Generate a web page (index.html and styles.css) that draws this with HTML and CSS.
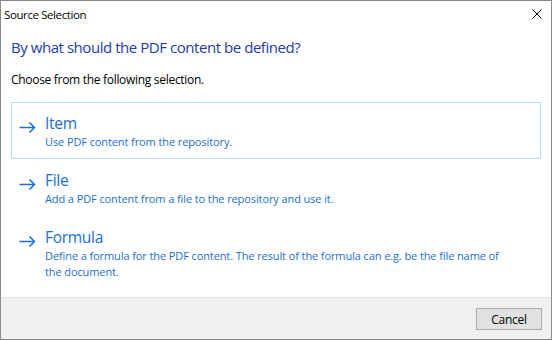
FILE: index.html
```html
<!DOCTYPE html>
<html>
<head>
<meta charset="utf-8">
<link rel="stylesheet" href="styles.css">
</head>
<body>
<div class="window">
  <div class="titlebar">
    <span class="title">Source Selection</span>
    <svg class="close" width="10" height="10" viewBox="0 0 10 10"><path d="M0.5 0.5L9.5 9.5M9.5 0.5L0.5 9.5" stroke="#000" stroke-width="1" fill="none"/></svg>
  </div>
  <div class="content">
    <h1 class="heading">By what should the PDF content be defined?</h1>
    <p class="intro">Choose from the following selection.</p>
    <div class="options">
      <div class="option selected">
        <svg class="arrow" width="17" height="11" viewBox="0 0 17 11"><path d="M0.5 5.5H15.5M10.5 0.5L15.5 5.5L10.5 10.5" stroke="#1a6fd0" stroke-width="1.5" fill="none"/></svg>
        <div class="otext">
          <div class="otitle">Item</div>
          <div class="odesc">Use PDF content from the repository.</div>
        </div>
      </div>
      <div class="option">
        <svg class="arrow" width="17" height="11" viewBox="0 0 17 11"><path d="M0.5 5.5H15.5M10.5 0.5L15.5 5.5L10.5 10.5" stroke="#1a6fd0" stroke-width="1.5" fill="none"/></svg>
        <div class="otext">
          <div class="otitle">File</div>
          <div class="odesc">Add a PDF content from a file to the repository and use it.</div>
        </div>
      </div>
      <div class="option">
        <svg class="arrow" width="17" height="11" viewBox="0 0 17 11"><path d="M0.5 5.5H15.5M10.5 0.5L15.5 5.5L10.5 10.5" stroke="#1a6fd0" stroke-width="1.5" fill="none"/></svg>
        <div class="otext">
          <div class="otitle">Formula</div>
          <div class="odesc">Define a formula for the PDF content. The result of the formula can e.g. be the file name of the document.</div>
        </div>
      </div>
    </div>
  </div>
  <div class="footer">
    <button class="btn">Cancel</button>
  </div>
</div>
</body>
</html>
```
FILE: styles.css
```css
html, body {
  margin: 0;
  padding: 0;
  background: #fff;
}
body {
  font-family: "Open Sans", "Noto Sans", sans-serif;
  font-size: 12px;
  color: #000;
}
.window {
  width: 550px;
  height: 338px;
  border: 1px solid #888;
  display: flex;
  flex-direction: column;
  background: #fff;
}
.titlebar {
  height: 28px;
  display: flex;
  align-items: center;
  justify-content: space-between;
  padding: 0 9px 0 3px;
}
.title {
  font-size: 11.5px;
  letter-spacing: -0.4px;
  line-height: 16px;
}
.close {
  display: block;
  margin-top: -3px;
}
.content {
  flex: 1;
  padding: 0 10px;
}
.heading {
  margin: 7px 0 0 0;
  font-size: 15px;
  font-weight: normal;
  color: #1c3ea6;
  line-height: 22px;
  letter-spacing: -0.45px;
}
.intro {
  margin: 14px 0 0 0;
  font-size: 12px;
  line-height: 16px;
  letter-spacing: -0.3px;
}
.options {
  margin-top: 14px;
  display: flex;
  flex-direction: column;
}
.option {
  display: flex;
  align-items: flex-start;
  border: 1px solid transparent;
  padding: 10px 8px 6px 7px;
  min-height: 39px;
  width: 513px;
}
.option.selected {
  border-color: #c0dcf3;
}
.arrow {
  display: block;
  margin-top: 9px;
  flex: none;
}
.otext {
  margin-left: 9px;
  color: #1a6fd0;
}
.otitle {
  font-size: 15.5px;
  line-height: 21px;
  letter-spacing: -0.3px;
}
.odesc {
  font-size: 11px;
  line-height: 16px;
  letter-spacing: -0.1px;
  width: 462px;
}
.footer {
  height: 41px;
  border-top: 1px solid #dfdfdf;
  background: #f0f0f0;
  display: flex;
  justify-content: flex-end;
  align-items: flex-start;
  padding-right: 9px;
}
.btn {
  margin-top: 10px;
  width: 66px;
  height: 22px;
  border: 1px solid #adadad;
  background: #e1e1e1;
  font-family: "Open Sans", "Noto Sans", sans-serif;
  font-size: 12px;
  letter-spacing: -0.3px;
  color: #000;
  padding: 0;
}
```
